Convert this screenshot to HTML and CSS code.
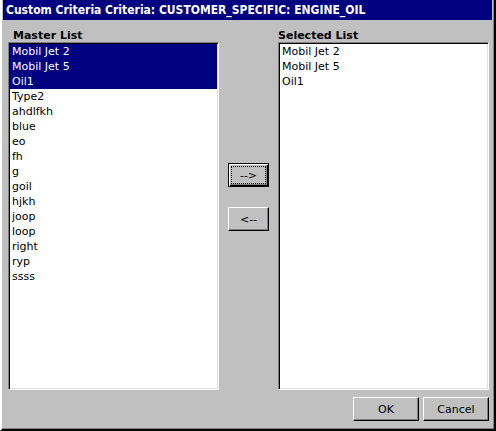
FILE: index.html
```html
<!DOCTYPE html>
<html>
<head>
<meta charset="utf-8">
<link rel="stylesheet" href="styles.css">
</head>
<body>
<div class="window">
  <div class="titlebar">Custom Criteria Criteria: CUSTOMER_SPECIFIC: ENGINE_OIL</div>
  <div class="content">
    <div class="col">
      <div class="label label-master">Master List</div>
      <div class="listbox">
        <div class="item sel">Mobil Jet 2</div>
        <div class="item sel">Mobil Jet 5</div>
        <div class="item sel">Oil1</div>
        <div class="item">Type2</div>
        <div class="item">ahdlfkh</div>
        <div class="item">blue</div>
        <div class="item">eo</div>
        <div class="item">fh</div>
        <div class="item">g</div>
        <div class="item">goil</div>
        <div class="item">hjkh</div>
        <div class="item">joop</div>
        <div class="item">loop</div>
        <div class="item">right</div>
        <div class="item">ryp</div>
        <div class="item">ssss</div>
      </div>
    </div>
    <div class="mid">
      <button class="btn focus arrow">--&gt;</button>
      <button class="btn arrow">&lt;--</button>
    </div>
    <div class="col">
      <div class="label">Selected List</div>
      <div class="listbox">
        <div class="item">Mobil Jet 2</div>
        <div class="item">Mobil Jet 5</div>
        <div class="item">Oil1</div>
      </div>
    </div>
  </div>
  <div class="footer">
    <button class="btn wide">OK</button>
    <button class="btn wide">Cancel</button>
  </div>
</div>
</body>
</html>
```
FILE: styles.css
```css
html, body {
  margin: 0;
  padding: 0;
  background: #c0c0c0;
}
.window {
  width: 496px;
  height: 431px;
  box-sizing: border-box;
  background: #c0c0c0;
  border-left: 2px solid #ffffff;
  border-right: 2px solid #000000;
  border-bottom: 2px solid #000000;
  box-shadow: inset -1px -1px #808080, -1px 0 #dfdfdf;
  display: flex;
  flex-direction: column;
  font-family: "DejaVu Sans", sans-serif;
  font-size: 11px;
  color: #000;
}
.titlebar {
  height: 20px;
  margin: 0 2px 0 1px;
  background: #000080;
  color: #fff;
  font-family: "DejaVu Sans Condensed", "DejaVu Sans", sans-serif;
  font-weight: bold;
  font-size: 12px;
  line-height: 21px;
  padding-left: 3px;
  white-space: nowrap;
  overflow: hidden;
}
.content {
  display: flex;
  padding: 0 5px 0 6px;
  height: 370px;
}
.col {
  width: 211px;
  display: flex;
  flex-direction: column;
}
.label {
  height: 22px;
  line-height: 13px;
  font-weight: bold;
  padding-top: 9px;
  box-sizing: border-box;
  white-space: nowrap;
}
.label-master {
  padding-left: 5px;
}
.listbox {
  flex: 1;
  background: #fff;
  border: 1px solid;
  border-color: #808080 #ffffff #ffffff #808080;
  box-shadow: inset 1px 1px #000, inset -1px -1px #dfdfdf;
  padding: 1px;
  overflow: hidden;
}
.item {
  height: 15px;
  line-height: 16px;
  padding-left: 2px;
  white-space: nowrap;
}
.item.sel {
  background: #000080;
  color: #fff;
}
.mid {
  width: 59px;
  display: flex;
  flex-direction: column;
  align-items: center;
  padding-top: 143px;
  gap: 20px;
  box-sizing: border-box;
}
.btn {
  font-family: "DejaVu Sans", sans-serif;
  font-size: 11px;
  color: #000;
  background: #c0c0c0;
  height: 24px;
  padding: 0;
  margin: 0;
  border: 1px solid;
  border-color: #ffffff #000000 #000000 #ffffff;
  box-shadow: inset -1px -1px #808080;
  box-sizing: border-box;
}
.arrow {
  width: 41px;
}
.btn.focus {
  border-color: #000;
  box-shadow: inset 1px 1px #fff, inset -1px -1px #000, inset -2px -2px #808080;
  outline: 1px dotted #000;
  outline-offset: -4px;
}
.footer {
  display: flex;
  justify-content: flex-end;
  gap: 4px;
  padding: 7px 5px 0 0;
}
.wide {
  width: 66px;
}
```
